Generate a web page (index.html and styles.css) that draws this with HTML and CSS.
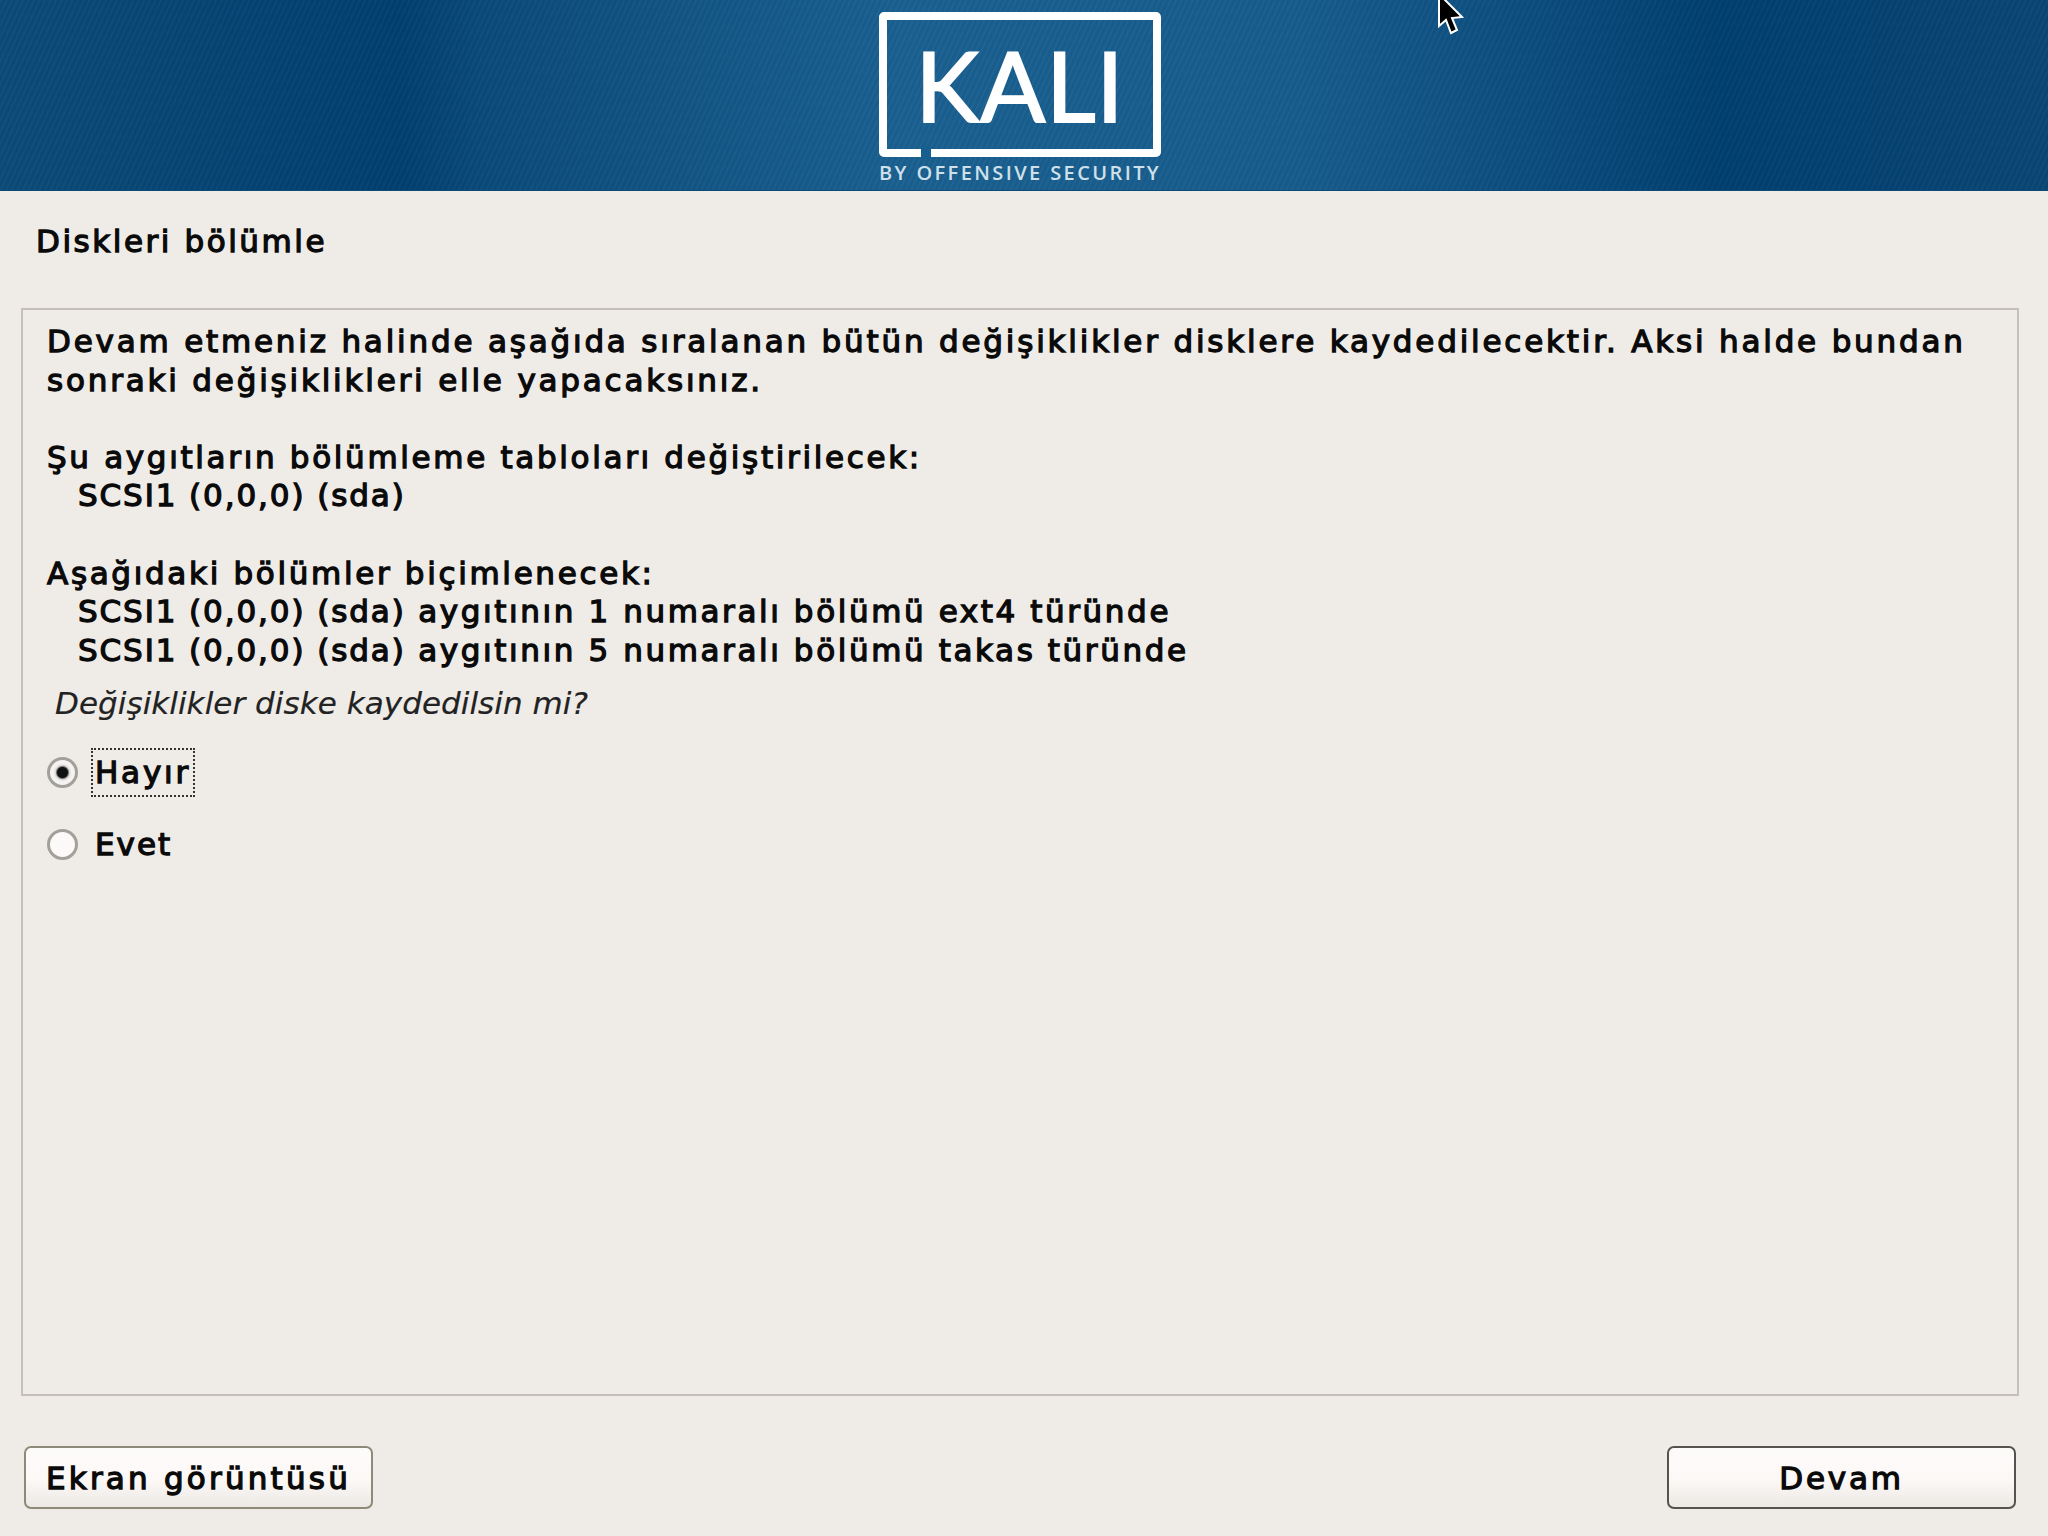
FILE: index.html
```html
<!DOCTYPE html>
<html lang="tr">
<head>
    <meta charset="UTF-8">
    <meta name="viewport" content="width=device-width, initial-scale=1.0">
    <title>Diskleri bölümle</title>
    <link rel="stylesheet" href="styles.css">
</head>
<body>
    <header class="banner">
        <div class="logo">
            <div class="logo-frame">
                <span class="logo-word">KALI</span>
                <span class="logo-gap"></span>
            </div>
            <div class="logo-by">BY OFFENSIVE SECURITY</div>
        </div>
        <svg class="cursor" width="28" height="38" viewBox="0 0 28 38">
            <path d="M2 -6 L2 26 L9 20 L14 33 L20 30 L15 18 L25 17 Z" fill="#000" stroke="#fff" stroke-width="2"/>
        </svg>
    </header>

    <main class="content">
        <h1 class="step-title">Diskleri bölümle</h1>
        <section class="panel">
            <div class="message">
                <p>Devam etmeniz halinde aşağıda sıralanan bütün değişiklikler disklere kaydedilecektir. Aksi halde bundan<br>sonraki değişiklikleri elle yapacaksınız.</p>
                <p>Şu aygıtların bölümleme tabloları değiştirilecek:<span class="indent"><span class="device">SCSI1 (0,0,0) (sda)</span></span></p>
                <p>Aşağıdaki bölümler biçimlenecek:<span class="indent"><span class="device">SCSI1 (0,0,0) (sda)</span> aygıtının 1 numaralı bölümü ext4 türünde</span><span class="indent"><span class="device">SCSI1 (0,0,0) (sda)</span> aygıtının 5 numaralı bölümü takas türünde</span></p>
            </div>
            <p class="question">Değişiklikler diske kaydedilsin mi?</p>
            <div class="option">
                <span class="radio radio-on"></span>
                <span class="option-label option-focus">Hayır</span>
            </div>
            <div class="option">
                <span class="radio"></span>
                <span class="option-label option-plain">Evet</span>
            </div>
        </section>
        <footer class="actions">
            <button class="btn">Ekran görüntüsü</button>
            <button class="btn btn-default">Devam</button>
        </footer>
    </main>
</body>
</html>
```

FILE: styles.css
```css
html, body {
    margin: 0;
    height: 1536px;
    overflow: hidden;
}
body {
    display: flex;
    flex-direction: column;
    background: #efece8;
    font-family: "DejaVu Sans", sans-serif;
    color: #0a0a0a;
}

.banner {
    position: relative;
    flex: 0 0 191px;
    box-sizing: border-box;
    display: flex;
    justify-content: center;
    padding: 12px 8px 0 0;
    border-bottom: 1px solid #0e4a76;
    background:
        repeating-linear-gradient(115deg, rgba(255,255,255,0.025) 0 2px, rgba(0,0,0,0.025) 2px 5px),
        linear-gradient(90deg, #0c4b79 0, #013f70 400px, #0a4a7a 480px, #1a6090 900px, #175c8c 1300px, #0d4f80 1500px, #003f70 1720px, #0a4675 2048px);
}
.logo {
    width: 282px;
}
.logo-frame {
    position: relative;
    box-sizing: border-box;
    height: 145px;
    border: 8px solid #fff;
    border-radius: 5px;
    display: flex;
    justify-content: center;
    align-items: center;
    color: #fff;
}
.logo-word {
    font-family: Lato, sans-serif;
    font-size: 96px;
    line-height: 1;
    letter-spacing: 1px;
    -webkit-text-stroke: 2px #fff;
}
.logo-gap {
    position: absolute;
    left: 34px;
    bottom: -10px;
    width: 10px;
    height: 13px;
    background: #185f8f;
}
.logo-by {
    margin-top: 4px;
    font-family: "Open Sans", sans-serif;
    font-size: 20px;
    font-weight: 600;
    line-height: 24px;
    letter-spacing: 2.4px;
    color: #cfe0ea;
    white-space: nowrap;
}
.cursor {
    position: absolute;
    left: 1437px;
    top: 0;
}

.content {
    flex: 1;
    display: flex;
    flex-direction: column;
    padding: 0 29px 27px 21px;
}
.step-title {
    margin: 0;
    padding: 32px 0 0 15px;
    height: 117px;
    box-sizing: border-box;
    font-size: 31px;
    line-height: 36px;
    font-weight: 400;
    letter-spacing: 2.55px;
    -webkit-text-stroke: 1.3px #0a0a0a;
}
.panel {
    box-sizing: border-box;
    height: 1088px;
    border: 2px solid #c4c0b8;
    padding: 12px 0 0 24px;
}
.message {
    font-size: 31px;
    line-height: 38.6px;
    letter-spacing: 2.8px;
    -webkit-text-stroke: 1.3px #0a0a0a;
}
.message p {
    margin: 0 0 38.6px 0;
}
.message p:last-child {
    margin-bottom: 0;
}
.message p + p {
    letter-spacing: 2.67px;
}
.message .indent {
    display: block;
    padding-left: 31px;
    letter-spacing: 2.6px;
}
.message .device {
    letter-spacing: 1.9px;
}
.question {
    margin: 15px 0 0 8px;
    font-size: 31px;
    line-height: 38px;
    letter-spacing: 0.05px;
    font-style: italic;
    color: #222;
    -webkit-text-stroke: 0.2px #222;
}
.option {
    display: flex;
    align-items: center;
    height: 72px;
    font-size: 31px;
    letter-spacing: 2.8px;
    -webkit-text-stroke: 1.3px #0a0a0a;
}
.question + .option {
    margin-top: 14px;
}
.radio {
    box-sizing: border-box;
    width: 31px;
    height: 31px;
    border: 3px solid #a3a09a;
    border-radius: 50%;
    background: #fbfaf9;
}
.radio-on {
    background: radial-gradient(circle, #111 0 5px, #d8d6d2 7px, #f5f3f1 9px);
}
.option-label {
    margin-left: 13px;
    padding: 6px 2px;
    border: 2px dotted transparent;
    line-height: 33px;
}
.option-plain {
    letter-spacing: 2px;
}
.option-focus {
    border-color: #333;
}

.actions {
    display: flex;
    justify-content: space-between;
    margin-top: 50px;
    padding: 0 3px;
}
.btn {
    width: 349px;
    height: 63px;
    border: 2px solid #8d8a78;
    border-radius: 7px;
    background: linear-gradient(#fefcfb, #fbf8f6 55%, #ece8e4);
    font-family: "DejaVu Sans", sans-serif;
    font-size: 31px;
    letter-spacing: 3.2px;
    color: #0a0a0a;
    -webkit-text-stroke: 1.3px #0a0a0a;
}
.btn-default {
    border-color: #55534e;
    letter-spacing: 2.8px;
}
```
